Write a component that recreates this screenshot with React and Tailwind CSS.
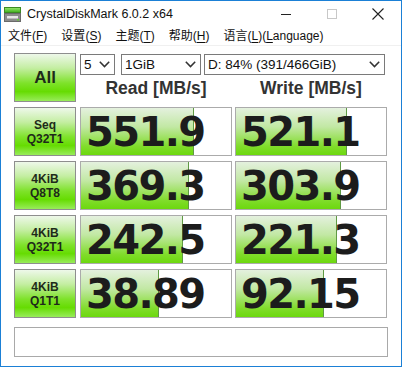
import React from 'react';

// ─── Benchmark rows (bar widths in px, read from the reference) ──────────────
const ROWS = [
  { top: 'Seq',  bottom: 'Q32T1', read: '551.9', readBar: 112, write: '521.1', writeBar: 110 },
  { top: '4KiB', bottom: 'Q8T8',  read: '369.3', readBar: 107, write: '303.9', writeBar: 104 },
  { top: '4KiB', bottom: 'Q32T1', read: '242.5', readBar: 101, write: '221.3', writeBar: 100 },
  { top: '4KiB', bottom: 'Q1T1',  read: '38.89', readBar: 77,  write: '92.15', writeBar: 87 },
];

const MENU = [
  { label: '文件', key: 'F' },
  { label: '设置', key: 'S' },
  { label: '主题', key: 'T' },
  { label: '帮助', key: 'H' },
  { label: '语言', key: 'L', extra: '(Language)' },
];

const GREEN_BTN =
  'bg-[linear-gradient(to_bottom,#eef8ea_0%,#c4eea2_30%,#7ee22a_62%,#66dc02_80%,#98ec5a_100%)] border border-[#8e8e8e]';

function Chevron() {
  return (
    <svg width="11" height="7" viewBox="0 0 11 7" className="shrink-0">
      <path d="M0.8 0.8 L5.5 5.6 L10.2 0.8" fill="none" stroke="#333" strokeWidth="1.5" />
    </svg>
  );
}

function Select({ value, width }) {
  return (
    <div
      className="h-[21px] bg-white border border-[#7a7a7a] flex items-center justify-between pl-[3px] pr-[4px] text-[13.5px] text-[#111] leading-none"
      style={{ width }}
    >
      <span>{value}</span>
      <Chevron />
    </div>
  );
}

function ValueBox({ value, bar }) {
  return (
    <div
      className="w-[152px] h-[49px] border border-[#ababab] bg-white bg-no-repeat bg-[linear-gradient(to_bottom,#e4f1de_0%,#c2e8a4_40%,#80dc2a_82%,#6cd80e_100%),linear-gradient(#5f9a44,#5f9a44)] flex items-center pl-[5px]"
      style={{ backgroundSize: `${bar}px 100%, ${bar + 1}px 100%` }}
    >
      <span className="font-['DejaVu_Sans',sans-serif] font-bold text-[40px] tracking-[-1.6px] text-[#1c1c1c] leading-none">
        {value}
      </span>
    </div>
  );
}

export default function App() {
  return (
    <div className="w-[402px] h-[367px] border border-[#1b80d6] bg-white flex flex-col font-['Liberation_Sans',sans-serif] overflow-hidden">

      {/* ── Title bar ── */}
      <div className="h-[26px] flex items-center shrink-0">
        <svg width="17" height="15" viewBox="0 0 17 15" className="ml-[3px] mt-[1px]">
          <defs>
            <linearGradient id="g" x1="0" y1="0" x2="0" y2="1">
              <stop offset="0" stopColor="#9be870" />
              <stop offset="1" stopColor="#3cae1a" />
            </linearGradient>
          </defs>
          <rect x="0.5" y="0.5" width="16" height="5" fill="url(#g)" stroke="#3b8a22" />
          <rect x="0.5" y="6.5" width="16" height="8" fill="#8c8c8c" stroke="#6a6a6a" />
          <rect x="3" y="9" width="11" height="2.5" fill="#e8e8e8" />
          <rect x="13" y="12" width="2" height="1.5" fill="#5fd030" />
        </svg>
        <span className="ml-[6px] text-[12.5px] text-[#111]">CrystalDiskMark 6.0.2 x64</span>
        <div className="ml-auto flex items-center">
          <div className="w-[46px] h-[26px] flex items-center justify-center">
            <div className="w-[10px] h-px bg-[#222]" />
          </div>
          <div className="w-[46px] h-[26px] flex items-center justify-center">
            <div className="w-[10px] h-[10px] border border-[#c8c8c8]" />
          </div>
          <div className="w-[46px] h-[26px] flex items-center justify-center">
            <svg width="12" height="12" viewBox="0 0 12 12">
              <path d="M0.5 0.5 L11.5 11.5 M11.5 0.5 L0.5 11.5" stroke="#222" strokeWidth="1.1" />
            </svg>
          </div>
        </div>
      </div>

      {/* ── Menu bar ── */}
      <div className="h-[19px] flex items-center gap-[14px] pl-[7px] border-b border-[#f0f0f0] text-[12px] text-[#111] font-['Liberation_Sans','Noto_Sans_CJK_SC',sans-serif] shrink-0">
        {MENU.map((m) => (
          <span key={m.key} className="leading-none">
            {m.label}(<span className="underline underline-offset-2">{m.key}</span>){m.extra && (
              <>(<span className="underline underline-offset-2">L</span>anguage)</>
            )}
          </span>
        ))}
      </div>

      {/* ── Main ── */}
      <div className="pt-[7px] pl-[13px] flex flex-col">

        {/* Top row: All + selects + headers */}
        <div className="flex">
          <div className={`w-[62px] h-[49px] ${GREEN_BTN} flex items-center justify-center text-[17px] font-bold text-[#1e2a1a]`}>
            All
          </div>
          <div className="ml-[4px] flex flex-col">
            <div className="flex items-center mt-[1px]">
              <Select value="5" width={35} />
              <div className="w-[6px]" />
              <Select value="1GiB" width={80} />
              <div className="w-[3px]" />
              <Select value="D: 84% (391/466GiB)" width={181} />
            </div>
            <div className="flex h-[27px] items-center text-[17.5px] font-bold text-[#333]">
              <div className="w-[152px] text-center">Read [MB/s]</div>
              <div className="w-[3px]" />
              <div className="w-[152px] text-center">Write [MB/s]</div>
            </div>
          </div>
        </div>

        {/* Result rows */}
        <div className="mt-[5px] flex flex-col gap-[5px]">
          {ROWS.map((r, i) => (
            <div key={i} className="flex">
              <div className={`w-[62px] h-[49px] ${GREEN_BTN} flex flex-col items-center justify-center text-[12px] leading-[14px] font-bold text-[#1e2a1a]`}>
                <span>{r.top}</span>
                <span>{r.bottom}</span>
              </div>
              <div className="w-[4px]" />
              <ValueBox value={r.read} bar={r.readBar} />
              <div className="w-[3px]" />
              <ValueBox value={r.write} bar={r.writeBar} />
            </div>
          ))}
        </div>

        {/* Comment box */}
        <div className="mt-[9px] w-[374px] h-[30px] border border-[#a9a9a9] bg-white" />
      </div>
    </div>
  );
}
